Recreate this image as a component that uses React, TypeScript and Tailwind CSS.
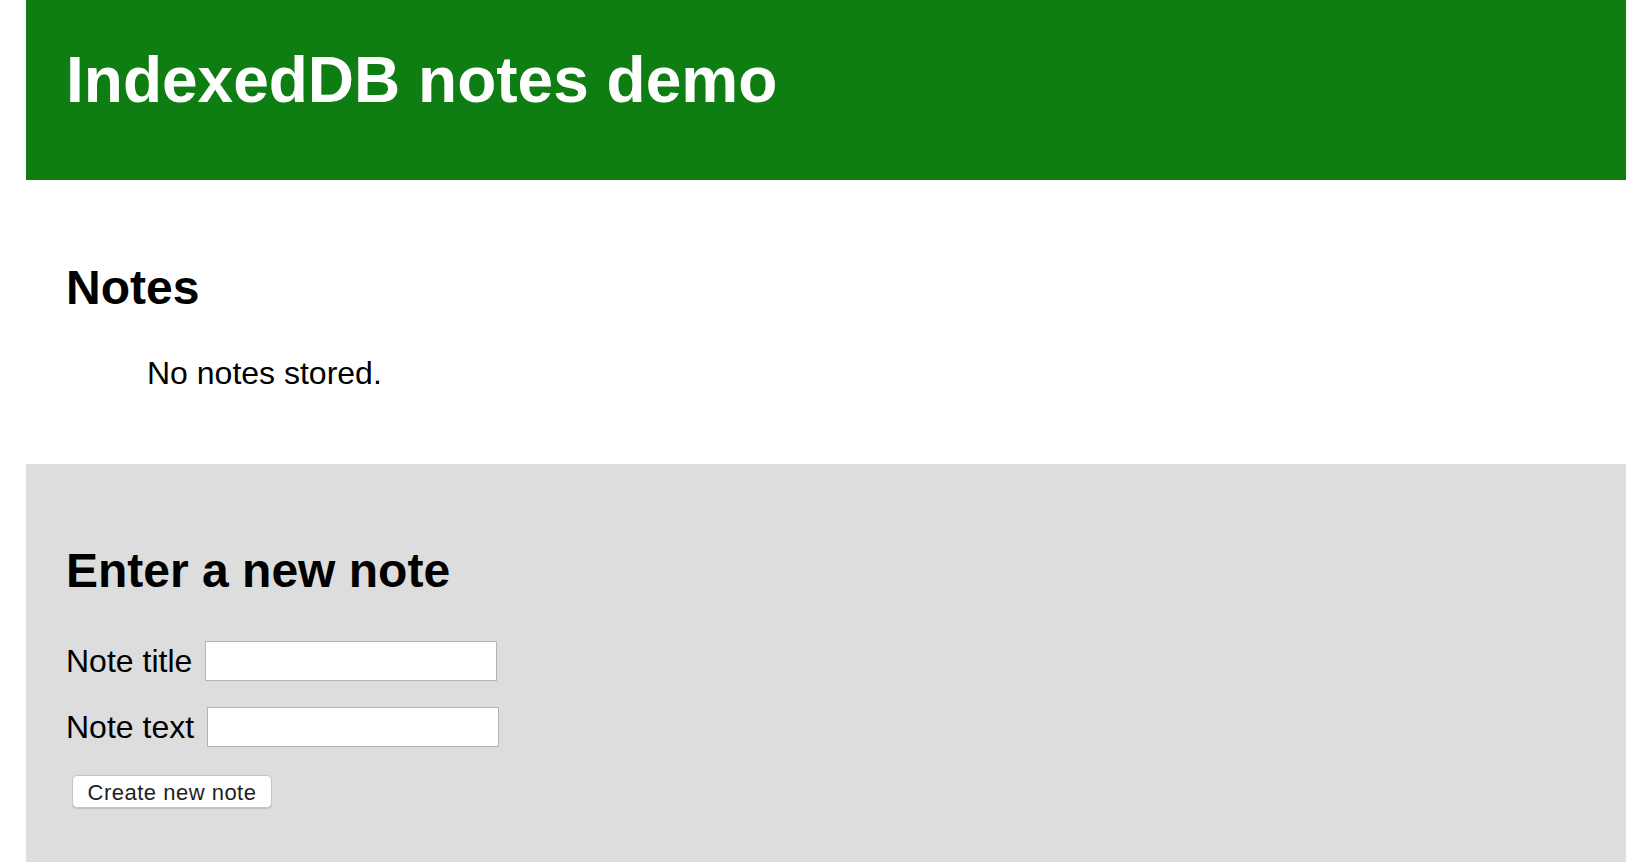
import React from 'react';

const font = { fontFamily: '"Liberation Sans", Arial, Helvetica, sans-serif' };

const Field: React.FC<{ id: string; label: string }> = ({ id, label }) => (
  <div className="flex items-center h-[40px] gap-[13px]">
    <label htmlFor={id} className="text-[32px] leading-[32px] text-black">
      {label}
    </label>
    <input
      id={id}
      type="text"
      className="w-[292px] h-[40px] bg-white border border-[#b4b4b4] outline-none px-1 text-[20px]"
    />
  </div>
);

const App: React.FC = () => {
  return (
    <div className="min-h-[862px] bg-white" style={font}>
      <div className="ml-[26px] w-[1600px]">
        <header className="h-[180px] bg-[#0f7e12] pl-[40px] pt-[48px]">
          <h1 className="text-[64px] leading-[64px] font-bold text-white">IndexedDB notes demo</h1>
        </header>

        <main className="pl-[40px] pt-[84px] h-[284px]">
          <h2 className="text-[48px] leading-[48px] font-bold text-black">Notes</h2>
          <ul className="pl-[81px] mt-[45px]">
            <li className="text-[32px] leading-[32px] text-black">No notes stored.</li>
          </ul>
        </main>

        <section className="bg-[#dddddd] pl-[40px] pt-[83px] min-h-[398px]">
          <h2 className="text-[48px] leading-[48px] font-bold text-black">Enter a new note</h2>
          <form className="mt-[46px] flex flex-col" onSubmit={(e) => e.preventDefault()}>
            <div className="flex flex-col gap-[26px]">
              <Field id="title" label="Note title" />
              <Field id="body" label="Note text" />
            </div>
            <div className="mt-[28px] ml-[6px]">
              <button
                type="submit"
                className="w-[200px] h-[33px] pt-[3px] bg-white border border-[#c4c4c4] rounded-[5px] shadow-[0_1px_1px_rgba(0,0,0,0.15)] text-[22px] leading-[22px] tracking-[0.5px] text-[#222]"
              >
                Create new note
              </button>
            </div>
          </form>
        </section>
      </div>
    </div>
  );
};

export default App;
